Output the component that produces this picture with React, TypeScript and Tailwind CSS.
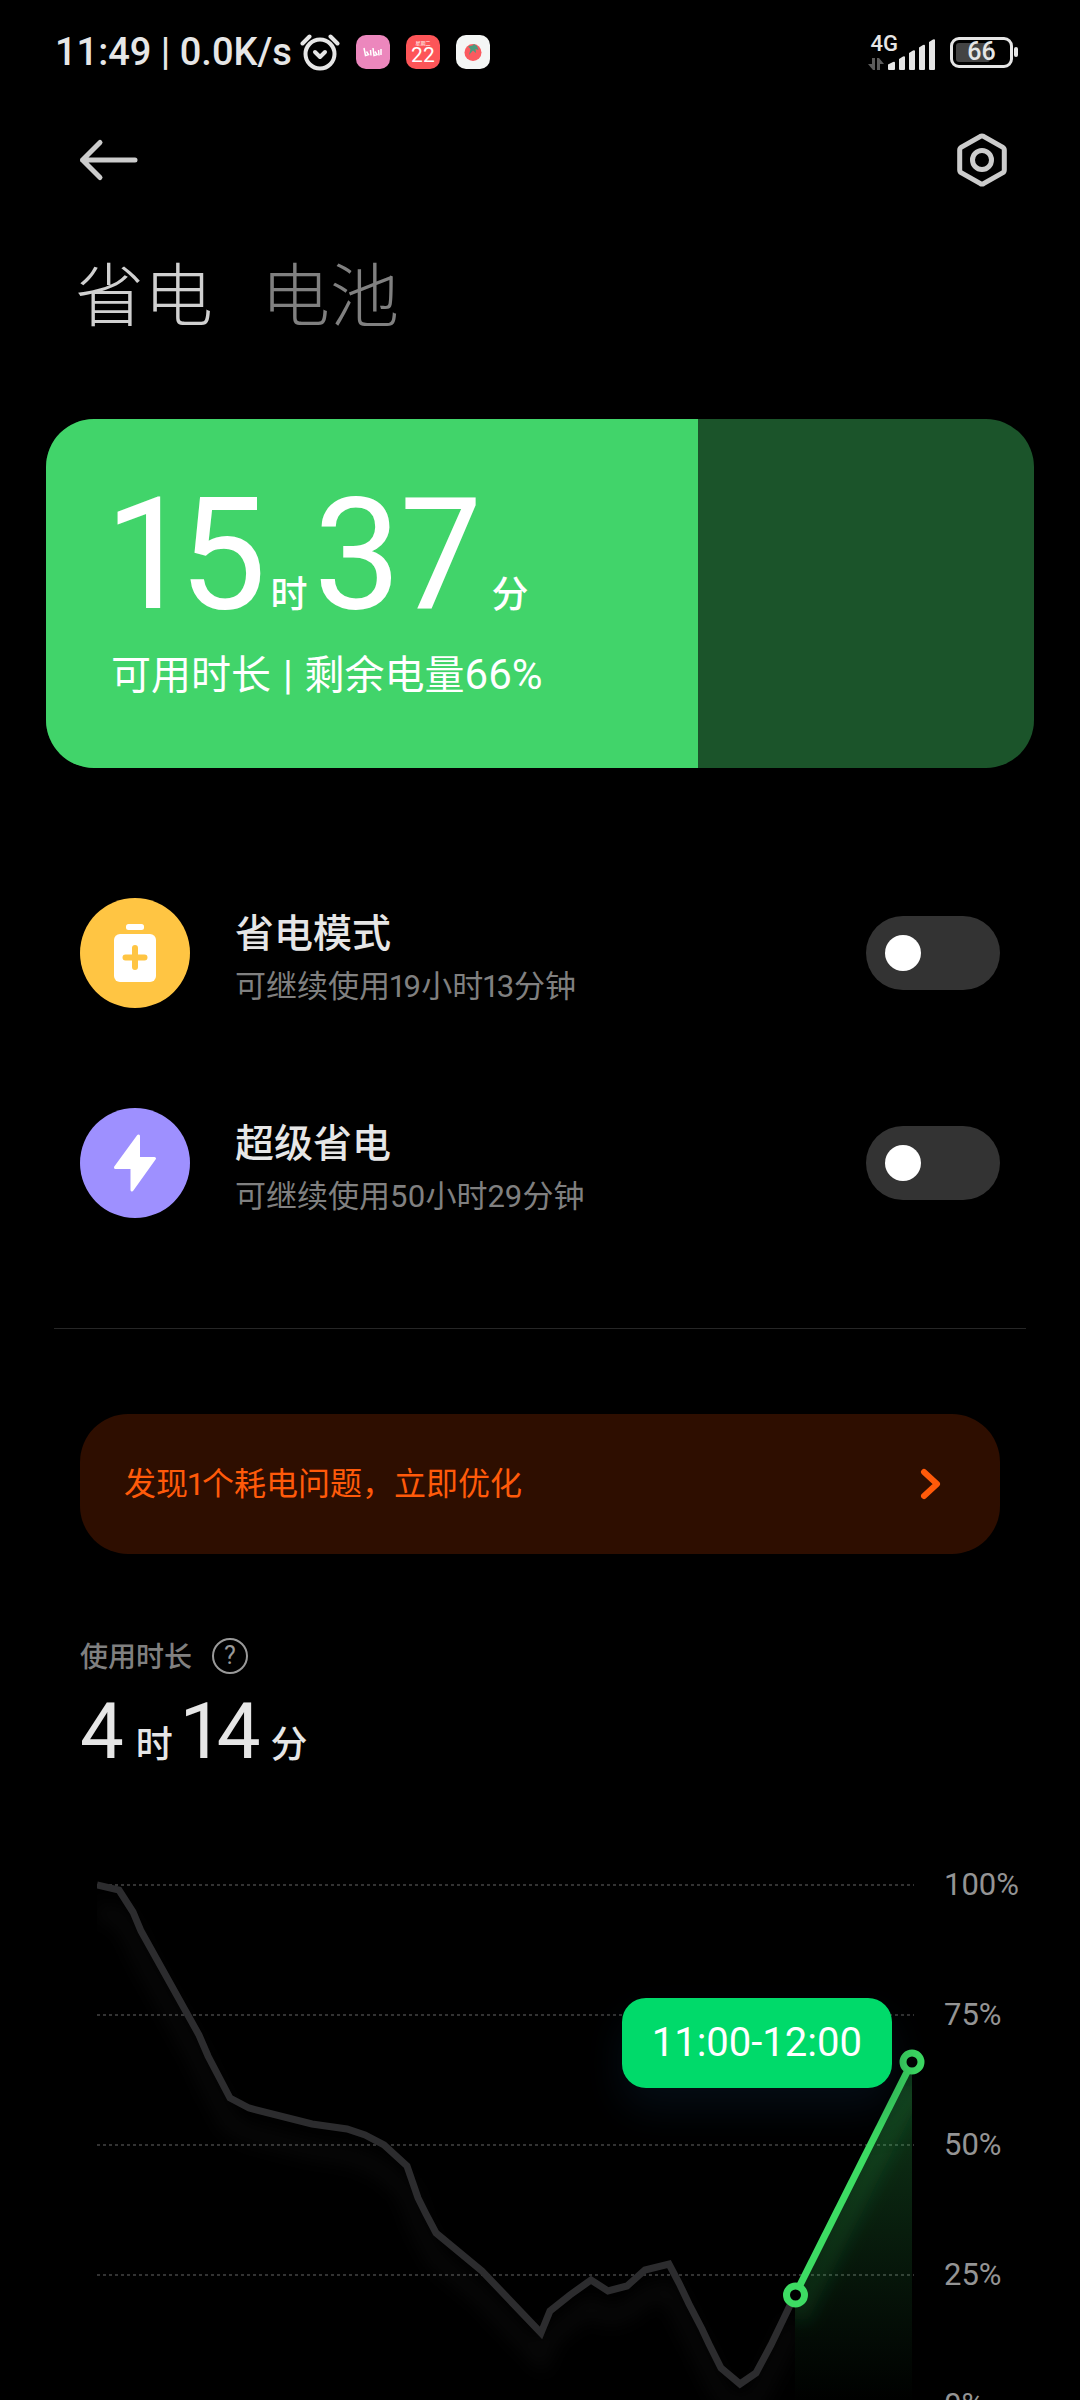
import { useState, type ReactNode } from "react";

const history =
  "0,0 22,5 36,27 44,46 102,150 111,171 133,213 152,223 215,239 250,244 268,250 287,260 310,281 321,313 329,329 339,348 385,386 444,448 453,426 473,410 494,395 511,406 530,401 548,385 572,379 582,398 592,419 605,444 612,459 624,483 643,499 659,488 674,460 698,410";

const levels = ["100%", "75%", "50%", "25%", "0%"];

function AlarmIcon() {
  return (
    <svg viewBox="0 0 40 38" className="ml-2 h-[38px] w-10" fill="none" stroke="#e6e6e6" strokeLinecap="round" strokeLinejoin="round" aria-hidden="true">
      <circle cx="20" cy="21" r="14.5" strokeWidth="4" />
      <path d="M15 19 20 24l5-5" strokeWidth="4" />
      <path d="M2.500 10.500 9.500 3.500M37.500 10.500 30.500 3.500" strokeWidth="4" />
    </svg>
  );
}

function StatusBar() {
  return (
    <header className="flex h-[104px] items-center pr-[62px] pl-[55px] text-[#e6e6e6]">
      <span className="text-[38px] leading-10 font-medium whitespace-nowrap">11:49 | 0.0K/s</span>
      <AlarmIcon />
      <div className="ml-4 flex gap-4">
        <svg viewBox="0 0 34 34" className="size-[34px]" aria-hidden="true">
          <rect width="34" height="34" rx="10" fill="#ec87bd" />
          <path d="M8 13l1.500 7.500 3-1-2-3M14.500 15l.5 5.500M17 13l1 7.500 3-1-2-3M22.500 15l.5 5.500M25 14v6" fill="none" stroke="#fff" strokeWidth="1.500" />
        </svg>
        <span className="flex size-[34px] flex-col items-center justify-center rounded-[10px] bg-[#fd5558] text-white">
          <span className="text-[5px] leading-[5px]">星期二</span>
          <span className="text-[21px] leading-[18px]">22</span>
        </span>
        <svg viewBox="0 0 34 34" className="size-[34px]" aria-hidden="true">
          <rect width="34" height="34" rx="10" fill="#f4f6f5" />
          <circle cx="17" cy="17.500" r="8.500" fill="#fb5a5f" />
          <path d="M12 11.500l4.500-1 1.500-1.500 3 2 1.500 4-3-1 .5 4-3-2.500-4 4.500 1.500-6z" fill="#4c9b7e" />
        </svg>
      </div>
      <div className="ml-auto flex items-center gap-3.5">
        <div className="flex items-end">
          <div className="flex flex-col items-end">
            <span className="mb-1 text-[22px] leading-5 font-medium">4G</span>
            <svg viewBox="0 0 16 12" className="mr-3.5 h-3 w-4" fill="#5c5c5c" aria-hidden="true">
              <path d="M4 0h3v12H5L0 6h4zM9 0h2l5 6h-4v6H9z" />
            </svg>
          </div>
          <svg viewBox="0 0 48 31" className="-ml-2.5 h-[31px] w-12" fill="#e6e6e6" aria-hidden="true">
            <path d="M0 25.500 5 23q2-1 2 1v6q0 1-1 1H1q-1 0-1-1zM11 20l4-2.500q2-1 2 1V30q0 1-1 1h-4q-1 0-1-1zM21 14l4-2.500q2-1 2 1V30q0 1-1 1h-4q-1 0-1-1zM31 8.500 35 6q2-1 2 1v23q0 1-1 1h-4q-1 0-1-1zM41 3l4-2.500q2-1 2 1V30q0 1-1 1h-4q-1 0-1-1z" />
          </svg>
        </div>
        <div className="flex items-center gap-px">
          <div className="relative flex h-[31px] w-[63px] items-center justify-center rounded-[9px] border-3 border-[#e6e6e6]">
            <span className="absolute inset-y-[3px] left-[3px] w-[34px] rounded-[3px] bg-[#444]" />
            <span className="relative text-[25px] leading-6 font-medium">66</span>
          </div>
          <span className="h-2.5 w-1 rounded-full bg-[#e6e6e6]" />
        </div>
      </div>
    </header>
  );
}

function ModeRow({ id, title, note, color, icon }: { id: string; title: string; note: string; color: string; icon: ReactNode }) {
  const [on, setOn] = useState(false);
  return (
    <div className="flex h-[110px] items-center">
      <span className={`flex size-[110px] items-center justify-center rounded-full ${color}`}>{icon}</span>
      <label htmlFor={id} className="ml-[45px] flex-1 pt-3">
        <span className="block text-[39px] leading-[56px] font-medium text-[#e6e6e6]">{title}</span>
        <span className="block text-[31px] leading-[50px] text-[#808080]">{note}</span>
      </label>
      <span className="relative flex">
        <input
          id={id}
          type="checkbox"
          role="switch"
          checked={on}
          onChange={() => setOn(!on)}
          className="peer h-[74px] w-[134px] appearance-none rounded-full bg-[#333] checked:bg-[#42d56b]"
        />
        <span className="pointer-events-none absolute top-[19px] left-[19px] size-9 rounded-full bg-white peer-checked:right-[19px] peer-checked:left-auto" />
      </span>
    </div>
  );
}

function Chart() {
  return (
    <section aria-label="电量" className="mt-[102px] flex pl-[97px]">
      <div className="relative flex-1">
        <svg viewBox="0 0 817 520" className="block h-auto w-full overflow-visible" fill="none" aria-hidden="true">
          <defs>
            <linearGradient id="area" x1="0" y1="177" x2="0" y2="520" gradientUnits="userSpaceOnUse">
              <stop offset="0" stopColor="#3ddc63" stopOpacity="0.260" />
              <stop offset="1" stopColor="#3ddc63" stopOpacity="0" />
            </linearGradient>
            <filter id="soft" x="-10%" y="-10%" width="120%" height="130%">
              <feGaussianBlur stdDeviation="9" />
            </filter>
            <clipPath id="plot">
              <rect x="0" y="-10" width="698" height="560" />
            </clipPath>
            <clipPath id="under">
              <path d="M698 410 815 177V520H698z" />
            </clipPath>
          </defs>
          <g stroke="#333" strokeWidth="2" strokeDasharray="3 3">
            <path d="M0 0H817M0 130H817M0 260H817M0 390H817M0 520H817" />
          </g>
          <g clipPath="url(#plot)">
            <polyline points={history} stroke="#fff" strokeOpacity="0.030" strokeWidth="16" transform="translate(0 26)" filter="url(#soft)" />
            <polyline points={history} stroke="#2c2c2e" strokeWidth="7" />
          </g>
          <path d="M698 410 815 177V520H698z" fill="url(#area)" />
          <g clipPath="url(#under)">
            <path d="M698 434 815 201" stroke="#3ddc63" strokeOpacity="0.120" strokeWidth="24" filter="url(#soft)" />
          </g>
          <path d="M698 410 815 177" stroke="#3ddc63" strokeWidth="7" />
          <g stroke="#3ddc63" strokeWidth="7" fill="#000">
            <circle cx="698.500" cy="410" r="9" />
            <circle cx="815" cy="177" r="9" />
          </g>
        </svg>
        <div className="absolute top-[21.7%] right-[2.7%] rounded-3xl bg-[#00da6a] px-[30px] py-5 text-[40px] leading-[50px] whitespace-nowrap text-white shadow-[0_20px_40px_#0a1a2a80]">
          11:00-12:00
        </div>
      </div>
      <div className="-mt-5 -mb-5 ml-[30px] flex w-[136px] flex-col justify-between text-[31px] leading-10 text-[#949494]">
        {levels.map((l) => (
          <span key={l}>{l}</span>
        ))}
      </div>
    </section>
  );
}

export default function App() {
  return (
    <main lang="zh-CN" className="h-screen overflow-x-hidden overflow-y-auto bg-black font-['Roboto','Noto_Sans_CJK_SC',sans-serif] text-white [scrollbar-width:none]">
      <StatusBar />

      <nav className="flex h-28 items-center justify-between pr-[70px] pl-[78px]">
        <button type="button" aria-label="返回">
          <svg viewBox="0 0 60 44" className="h-11 w-[60px]" fill="none" stroke="#ccc" strokeWidth="5" strokeLinecap="round" strokeLinejoin="round" aria-hidden="true">
            <path d="M22 4.500 4.500 22 22 39.500M4.500 22H57" />
          </svg>
        </button>
        <button type="button" aria-label="设置">
          <svg viewBox="0 0 56 56" className="size-14" fill="none" stroke="#ccc" strokeWidth="5" strokeLinejoin="round" aria-hidden="true">
            <path d="M26.500 4.300q1.500-.8 3 0l19 10.800q1.800 1 1.800 3v19.800q0 2-1.800 3l-19 10.800q-1.500.8-3 0l-19-10.800q-1.800-1-1.800-3V18.100q0-2 1.800-3z" />
            <circle cx="28" cy="28" r="9.500" />
          </svg>
        </button>
      </nav>

      <div role="tablist" className="mt-[34px] flex gap-12 pl-[75px] text-[69px] leading-[96px] font-light">
        <button type="button" role="tab" aria-selected="true" className="text-[#d0d0d0]">省电</button>
        <button type="button" role="tab" aria-selected="false" className="text-[#808080]">电池</button>
      </div>

      <section className="relative mx-[46px] mt-[73px] overflow-hidden rounded-[48px] bg-[#1b542a] px-[65px] pt-[54px] pb-[62px]">
        <div className="absolute inset-y-0 left-0 w-[66%] bg-[#41d46a]" />
        <p className="relative flex items-baseline proportional-nums">
          <span className="text-[156px] leading-[164px]">15</span>
          <span className="ml-1 text-[37px] font-medium">时</span>
          <span className="ml-1.5 text-[156px] leading-[164px]">37</span>
          <span className="ml-2.5 text-[37px] font-medium">分</span>
        </p>
        <p className="relative mt-2 text-[40px] leading-[60px]">
          可用时长<span className="mx-0.5"> | </span>剩余电量<span className="text-[42px]">66%</span>
        </p>
      </section>

      <section className="mt-[130px] flex flex-col gap-[100px] px-20 proportional-nums">
        <ModeRow
          id="saver"
          title="省电模式"
          note="可继续使用19小时13分钟"
          color="bg-[#ffc543]"
          icon={
            <svg viewBox="0 0 42 58" className="h-[58px] w-[42px]" aria-hidden="true">
              <rect x="12" width="18" height="6" rx="2.500" fill="#fff" />
              <rect y="10" width="42" height="48" rx="6" fill="#fff" />
              <path d="M21 24v19M11.500 33.500h19" stroke="#ffc543" strokeWidth="6" strokeLinecap="round" />
            </svg>
          }
        />
        <ModeRow
          id="ultra"
          title="超级省电"
          note="可继续使用50小时29分钟"
          color="bg-[#9e90ff]"
          icon={
            <svg viewBox="0 0 42 58" className="h-[58px] w-[42px]" fill="#fff" stroke="#fff" strokeWidth="3" strokeLinejoin="round" aria-hidden="true">
              <path d="M24.500 2v22.500H40.500L18 56V33.500H1.500z" />
            </svg>
          }
        />
      </section>

      <hr className="mx-[54px] mt-[110px] border-t border-[#262626]" />

      <a href="#optimize" className="mx-20 mt-[85px] flex h-[140px] items-center justify-between rounded-[48px] bg-[#2e0e00] pr-[58px] pl-11 text-[32px] text-[#ff5a0a] proportional-nums">
        发现1个耗电问题，立即优化
        <svg viewBox="0 0 22 32" className="h-8 w-[22px]" fill="none" stroke="#ff5a0a" strokeWidth="6" strokeLinecap="round" strokeLinejoin="round" aria-hidden="true">
          <path d="M4 4l13 12L4 28" />
        </svg>
      </a>

      <section className="mt-20 px-20">
        <div className="flex h-11 items-center gap-5 text-[28px] text-[#808080]">
          <h2 className="pt-1 font-medium">使用时长</h2>
          <button type="button" aria-label="说明" className="flex size-9 items-center justify-center rounded-full border-2 border-[#999] text-[25px] leading-6 text-[#999]">
            ?
          </button>
        </div>
        <p className="flex items-baseline pt-0.5 text-[#e6e6e6] proportional-nums">
          <span className="text-[78px] leading-[103px]">4</span>
          <span className="ml-3 text-[37px] font-medium">时</span>
          <span className="ml-2.5 text-[78px] leading-[103px]">14</span>
          <span className="ml-2.5 text-[37px] font-medium">分</span>
        </p>
      </section>

      <Chart />
    </main>
  );
}
